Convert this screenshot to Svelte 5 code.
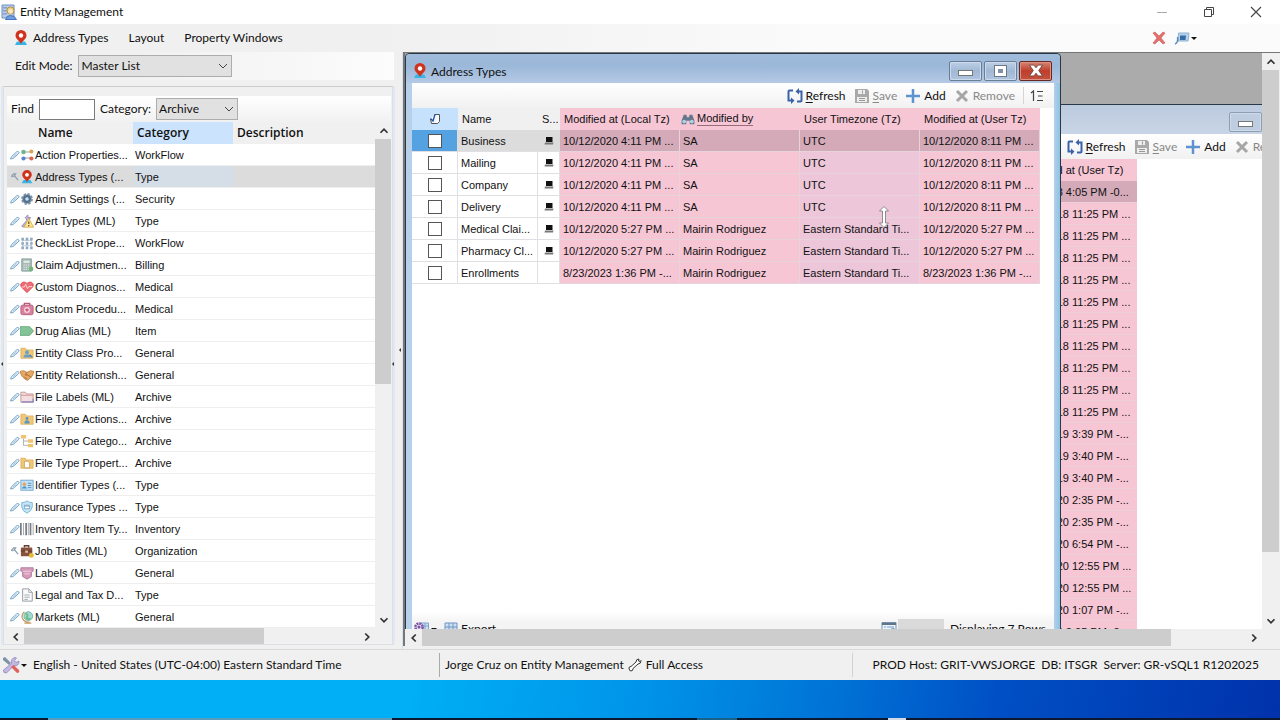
<script>
  const pen = '<path d="M1 14.500 2 11 10.500 3Q12.500 1.500 14 3T13.500 6L5 13.500 1 14.500Z" fill="#e4f1fa" stroke="#5b93bd" stroke-width="1.3"/><path d="M4.500 11.500 11 5.500" stroke="#8ab5d4"/>';
  const hammer = '<path d="M2 7 6 3 9 3 7 6 13 13" fill="none" stroke="#8b9dad" stroke-width="2"/><path d="M2 7 5 8 7 6" fill="#b9c4cf" stroke="#73879a"/>';
  const pin = '<path d="M2 15 4 11.500H12L14 15Z" fill="#35b5e8"/><path d="M8 14C7 11 2.500 9 2.500 5.500A5.500 5.500 0 0 1 13.500 5.500C13.500 9 9 11 8 14Z" fill="#d0321b"/><circle cx="8" cy="5.500" r="2.200" fill="#fff"/>';
  const folder = '<path d="M1 2.500H6L7.500 4.500H15V14H1Z" fill="#f1c777" stroke="#d9a850" stroke-width=".8"/>';
  const art = {
    flow: '<path d="M3 4.500H13M3 11.500H13" stroke="#98a4ae" stroke-width="1.200"/><circle cx="4" cy="4.500" r="2.600" fill="#6db58c"/><circle cx="13" cy="4" r="2.300" fill="#d8a24e"/><circle cx="4" cy="12" r="2.400" fill="#5a83d0"/><circle cx="13" cy="12" r="2.400" fill="#d9634f"/>',
    pin,
    gear: '<circle cx="8" cy="8" r="5.500" fill="#8ba1b7" stroke="#8094aa" stroke-width="2.500" stroke-dasharray="2.600 1.700"/><circle cx="8" cy="8" r="4.500" fill="#54718e"/><circle cx="8" cy="8" r="2" fill="#c9e6f8"/>',
    alert: '<path d="M2 14 8 7 6 4 9 1 9 4 12 4 10 8 4 15Z" fill="#c1b5dc" stroke="#9487bb"/><path d="M10 5 15.500 15H4.500Z" fill="#fbe391" stroke="#d7b04a"/><path d="M10 8.500V11.500M10 12.500V14" stroke="#59491f" stroke-width="1.300"/>',
    check: '<path d="M3 2V14M8 2V14M13 2V14M3 5H13M3 11H13" stroke="#bbcad8"/><path d="M1.500 2H4.500V5H1.500ZM6.500 2H9.500V5H6.500ZM11.500 2H14.500V5H11.500ZM1.500 7H4.500V10H1.500ZM6.500 7H9.500V10H6.500ZM11.500 7H14.500V10H11.500ZM1.500 12H4.500V15H1.500ZM6.500 12H9.500V15H6.500ZM11.500 12H14.500V15H11.500Z" fill="#91a9c3"/>',
    claim: '<path d="M2 1H13V15H2Z" fill="#a9b9b7" stroke="#84a09a"/><path d="M4 3H11V5.500H4Z" fill="#dff0e9"/><path d="M4 8H11M4 10.500H11M4 13H11" stroke="#e8f3ef" stroke-dasharray="1.500 1"/><circle cx="12.500" cy="12.500" r="2.800" fill="#74b67e"/>',
    heart: '<path d="M8 14.500 1.500 8C-1 4 4 0 8 4 12 0 17 4 14.500 8Z" fill="#ee6d74" stroke="#d9545f"/><path d="M2 8H5L6.500 5 8.500 10 10 7.500H14" fill="none" stroke="#fde1e2"/>',
    kit: '<path d="M5 4V1.500H11V4" fill="none" stroke="#b65c7c" stroke-width="1.500"/><rect x="1" y="3.500" width="14" height="11" rx="2" fill="#d9829f" stroke="#b55a7b"/><circle cx="8" cy="9" r="3.300" fill="#f8dce6"/><path d="M8 7V11M6 9H10" stroke="#c9486d" stroke-width="1.400"/>',
    tag: '<path d="M0 3H11L15.500 8 11 13H0Z" fill="#83c397" stroke="#68ad7f"/>',
    entity: folder + '<circle cx="8" cy="7" r="2.200" fill="#6a9fc9"/><path d="M4 13Q4 9.500 8 9.500T12 13Z" fill="#6a9fc9"/><path d="m11 10 3 3" stroke="#4e7fae" stroke-width="1.600"/>',
    hands: '<path d="M0 4 4 3 8 5 12 3 16 4 14 9 9 14 6 13 2 9Z" fill="#e5a965" stroke="#bd803f"/><path d="M8 5 6 8 9 8 13 11M5 10 8 13" fill="none" stroke="#9b642d"/>',
    label: '<path d="M1 2.500H6L7.500 4.500H15V14H1Z" fill="#f2dde1" stroke="#c3918f"/><path d="M1 6H15" stroke="#cf8f8d"/><path d="M2 13.500H15V10" fill="none" stroke="#8686c8" stroke-width="1.500"/>',
    action: folder + '<circle cx="8" cy="7.500" r="1.700" fill="#5796c8"/><path d="M5 13Q5 9.500 8 9.500T11 13Z" fill="#5796c8"/>',
    tree: '<path d="M4 5V13H10M4 8H10" fill="none" stroke="#a4acb1"/><path d="M1 1H7V5H1ZM9 6H15V10H9ZM9 11.500H15V15H9Z" fill="#efc36f"/>',
    prop: folder + '<path d="M5 6H9L11 8V13.500H5Z" fill="#fff" stroke="#c5a25a"/>',
    id: '<rect x="1" y="2.500" width="14" height="11.500" fill="#c4e1f5" stroke="#69a5cd"/><circle cx="5" cy="7" r="2" fill="#e5a458"/><path d="M2 12Q5 7 8 12Z" fill="#4a91c5"/><path d="M9 6H13M9 8.500H13M9 11H13" stroke="#4687b7"/>',
    shield: '<path d="M2 3Q6 3 8 1 10 3 14 3V8Q13 13 8 15 3 13 2 8Z" fill="#c4e5fa" stroke="#6fb0d9"/><path d="M5 6H11V10H5Z" fill="#fff" stroke="#77a2c1"/><path d="M5 7H11" stroke="#77a2c1"/>',
    bars: '<path d="M1 1V15M7 1V15M12 1V15" stroke="#7b8087" stroke-width="2"/><path d="M4 1V15M9.500 1V15M15 1V15" stroke="#9da1a8"/>',
    case: '<path d="M5 4V2H10V4" fill="none" stroke="#633e31" stroke-width="1.500"/><rect x="1" y="4" width="13" height="10" rx="1" fill="#89523e"/><path d="M1 8H14" stroke="#5e3428"/><circle cx="13" cy="13" r="2.800" fill="#dfbb38"/><path d="M6 7.500H9V10H6Z" fill="#dec0a7"/>',
    ribbon: '<path d="M1 2H15V6H13V12L8 15 3 12V6H1Z" fill="#d69ab9" stroke="#ae769b"/><path d="M3 6H13M5 9H11" stroke="#f4dce8"/>',
    doc: '<path d="M3 1H10L14 5V15H3Z" fill="#fafafa" stroke="#8c949c"/><path d="M10 1V5H14M5 8H11M5 10.500H11M5 13H9" fill="none" stroke="#9aa2aa"/>',
    globe: '<circle cx="9.500" cy="7" r="5" fill="#a1d8d0" stroke="#65b2a6"/><path d="M6 4Q10 5 8 8T12 10" fill="none" stroke="#67bd83" stroke-width="2"/><path d="M5 2Q1 6 3 10T11 14M5 15H13" fill="none" stroke="#c79c62" stroke-width="1.500"/>'
  };
  const items = [
    ['flow', 'Action Properties...', 'WorkFlow'], ['pin', 'Address Types (...', 'Type'], ['gear', 'Admin Settings (...', 'Security'],
    ['alert', 'Alert Types (ML)', 'Type'], ['check', 'CheckList Prope...', 'WorkFlow'], ['claim', 'Claim Adjustmen...', 'Billing'],
    ['heart', 'Custom Diagnos...', 'Medical'], ['kit', 'Custom Procedu...', 'Medical'], ['tag', 'Drug Alias (ML)', 'Item'],
    ['entity', 'Entity Class Pro...', 'General'], ['hands', 'Entity Relationsh...', 'General'], ['label', 'File Labels (ML)', 'Archive'],
    ['action', 'File Type Actions...', 'Archive'], ['tree', 'File Type Catego...', 'Archive'], ['prop', 'File Type Propert...', 'Archive'],
    ['id', 'Identifier Types (...', 'Type'], ['shield', 'Insurance Types ...', 'Type'], ['bars', 'Inventory Item Ty...', 'Inventory'],
    ['case', 'Job Titles (ML)', 'Organization'], ['ribbon', 'Labels (ML)', 'General'], ['doc', 'Legal and Tax D...', 'Type'], ['globe', 'Markets (ML)', 'General']
  ];
  const rows = [
    ['Business', true, '10/12/2020 4:11 PM ...', 'SA', 'UTC', '10/12/2020 8:11 PM ...'],
    ['Mailing', true, '10/12/2020 4:11 PM ...', 'SA', 'UTC', '10/12/2020 8:11 PM ...'],
    ['Company', true, '10/12/2020 4:11 PM ...', 'SA', 'UTC', '10/12/2020 8:11 PM ...'],
    ['Delivery', true, '10/12/2020 4:11 PM ...', 'SA', 'UTC', '10/12/2020 8:11 PM ...'],
    ['Medical Clai...', true, '10/12/2020 5:27 PM ...', 'Mairin Rodriguez', 'Eastern Standard Ti...', '10/12/2020 5:27 PM ...'],
    ['Pharmacy Cl...', true, '10/12/2020 5:27 PM ...', 'Mairin Rodriguez', 'Eastern Standard Ti...', '10/12/2020 5:27 PM ...'],
    ['Enrollments', false, '8/23/2023 1:36 PM -...', 'Mairin Rodriguez', 'Eastern Standard Ti...', '8/23/2023 1:36 PM -...']
  ];
  const late = Array(10).fill('4/12/2018 11:25 PM ...');
  const backRows = ['4/5/2018 4:05 PM -0...', ...late, '8/14/2019 3:39 PM -...', '8/14/2019 3:40 PM -...', '8/14/2019 3:40 PM -...',
    '7/10/2020 2:35 PM -...', '7/10/2020 2:35 PM -...', '7/10/2020 6:54 PM -...', '7/13/2020 12:55 PM ...', '7/13/2020 12:55 PM ...',
    '7/14/2020 1:07 PM -...', '9/3/2020 3:05 PM -0...'];
</script>

<svelte:head><title>Entity Management</title></svelte:head>

{#snippet arrow(d)}
  <svg class="arrow" viewBox="0 0 16 16" aria-hidden="true"><path {d} fill="none" stroke="#333" stroke-width="2" /></svg>
{/snippet}

{#snippet pinIcon()}
  <svg class="ic" viewBox="0 0 16 16" aria-hidden="true">{@html pin}</svg>
{/snippet}

{#snippet toolbar()}
  <div class="tools">
    <button><svg class="ic" viewBox="0 0 16 16"><path d="M6 2.500H2.500Q1.500 2.500 1.500 3.500V12.500H5M10 13.500H13.500Q14.500 13.500 14.500 12.500V3.500H10" fill="none" stroke="#3a62a8" stroke-width="2"/><path d="M12 0 8.500 3.500 12 6.500ZM4 9.500 7.500 12.500 4 16Z" fill="#3a62a8"/></svg><span><u>R</u>efresh</span></button>
    <button class="off"><svg class="ic" viewBox="0 0 16 16"><path d="M1 1H13L15 3V15H1Z" fill="#a9a9a9"/><path d="M4 2H11V6H4ZM3 9H13V14H3Z" fill="#eee"/><path d="M8.500 2.500V5.500M5 10.500H11M5 12.500H11" stroke="#999"/></svg><span><u>S</u>ave</span></button>
    <button><svg class="ic" viewBox="0 0 16 16"><path d="M8 1V15M1 8H15" stroke="#5f93d0" stroke-width="2.500"/></svg><span>Add</span></button>
    <button class="off"><svg class="ic" viewBox="0 0 16 16"><path d="M3 3 13 13M13 3 3 13" stroke="#a6a6a6" stroke-width="3"/></svg><span>Remove</span></button>
    <i class="bar"></i>
    <button aria-label="Row numbering"><svg class="ic" viewBox="0 0 16 16"><path d="M1 5 3.500 3V13M7 3.500H13M8 8H12.500M7 12.500H13" fill="none" stroke="#444" stroke-width="1.200"/></svg></button>
  </div>
{/snippet}

{#snippet winButtons()}
  <div class="wbtns">
    <button aria-label="Minimize"><i class="min"></i></button>
    <button aria-label="Maximize"><i class="max"></i></button>
    <button class="red" aria-label="Close"><svg viewBox="0 0 16 12"><path d="M2 1H6L8 3.500 10 1H14L10.500 6 14 11H10L8 8.500 6 11H2L5.500 6Z" fill="#fff" stroke="#6d4540" stroke-width=".8"/></svg></button>
  </div>
{/snippet}

<div class="app">
  <header class="title">
    <svg class="ic" viewBox="0 0 16 16" aria-hidden="true"><path d="M1 1H13V14H1Z" fill="#b9cde9" stroke="#6d8fc0"/><path d="M3 3V12M5 3V12" stroke="#5378b4" stroke-dasharray="1.500 1.500"/><circle cx="9.500" cy="6.500" r="3.600" fill="#ecd07e" stroke="#b08f4a"/><circle cx="9.500" cy="7.500" r="2.300" fill="#f9e8c4"/><path d="M4.500 15.500Q5 11.500 9.500 11.500T15.500 15.500Z" fill="#6f9ee0" stroke="#4a76bd"/></svg>
    <h1>Entity Management</h1>
    <div class="caption">
      <button aria-label="Minimize"><svg viewBox="0 0 12 12"><path d="M1 6.500H11" stroke="#aaa"/></svg></button>
      <button aria-label="Restore"><svg viewBox="0 0 12 12"><path d="M1.500 3.500H8.500V10.500H1.500ZM3.500 3.500V1.500H10.500V8.500H8.500" fill="none" stroke="#444"/></svg></button>
      <button aria-label="Close"><svg viewBox="0 0 12 12"><path d="M1 1 11 11M11 1 1 11" stroke="#444" stroke-width="1.100"/></svg></button>
    </div>
  </header>

  <nav class="menu">
    <button>{@render pinIcon()}<span>Address Types</span></button>
    <button>Layout</button>
    <button>Property Windows</button>
    <div class="menu-end">
      <button aria-label="Close window"><svg class="ic" viewBox="0 0 16 16"><path d="M2 3 4 2 8 6 12 2 14 3 10 8 14 13 12 14 8 10 4 14 2 13 6 8Z" fill="#e3706b" stroke="#cf5955" stroke-width=".6"/></svg></button>
      <button aria-label="Windows"><svg class="ic" viewBox="0 0 16 16"><path d="M4.500 3H15L14 11H4Z" fill="#b8d1e8" stroke="#8fb2d3"/><path d="M6 5.500H12L11.500 10H6Z" fill="#376da6"/><path d="M1 14Q4.500 12.500 3.500 7" fill="none" stroke="#5b8cbb" stroke-width="1.500"/></svg><i class="caret"></i></button>
    </div>
  </nav>

  <main>
    <aside>
      <div class="mode">
        <label for="mode">Edit Mode:</label>
        <div class="combo wide"><select id="mode"><option>Master List</option></select><svg viewBox="0 0 10 10" aria-hidden="true"><path d="M1 3 5 7 9 3" fill="none" stroke="#444"/></svg></div>
      </div>
      <section class="panel">
        <div class="find">
          <label for="find">Find</label><input id="find" type="text" />
          <label for="cat">Category:</label>
          <div class="combo"><select id="cat"><option>Archive</option></select><svg viewBox="0 0 10 10" aria-hidden="true"><path d="M1 3 5 7 9 3" fill="none" stroke="#444"/></svg></div>
        </div>
        <div class="list">
          <div class="clip">
            <table class="nav">
              <colgroup><col class="c-name" /><col class="c-cat" /><col /></colgroup>
              <thead><tr><th class="first">Name</th><th class="sorted">Category</th><th>Description</th></tr></thead>
              <tbody>
                {#each items as [icon, name, cat], i}
                  <tr class:sel={i === 1}>
                    <td><div class="entry"><svg class="mini" viewBox="0 0 16 16" aria-hidden="true">{@html i === 1 || i === 18 ? hammer : pen}</svg><svg class="obj" viewBox="0 0 16 16" aria-hidden="true">{@html art[icon]}</svg><span>{name}</span></div></td>
                    <td>{cat}</td><td></td>
                  </tr>
                {/each}
              </tbody>
            </table>
          </div>
          <div class="sb v">
            <button aria-label="Scroll up">{@render arrow('M4 10 8 6 12 10')}</button>
            <div class="track"><div class="thumb half"></div></div>
            <button aria-label="Scroll down">{@render arrow('M4 6 8 10 12 6')}</button>
          </div>
          <div class="sb h">
            <button aria-label="Scroll left">{@render arrow('M10 4 6 8 10 12')}</button>
            <div class="track"><div class="thumb part"></div></div>
            <button aria-label="Scroll right">{@render arrow('M6 4 10 8 6 12')}</button>
          </div>
        </div>
      </section>
      <i class="grip g1"></i><i class="grip g2"></i><i class="grip g3"></i>
    </aside>

    <section class="mdi">
      <div class="canvas">
        <article class="win back">
          <div class="wtitle">{@render winButtons()}</div>
          <div class="body">
            {@render toolbar()}
            <table class="stamps">
              <thead><tr><th>Modified at (User Tz)</th></tr></thead>
              <tbody>{#each backRows as stamp, i}<tr class:cur={i === 0}><td>{stamp}</td></tr>{/each}</tbody>
            </table>
          </div>
        </article>

        <article class="win front">
          <div class="wtitle">
            {@render pinIcon()}<h2>Address Types</h2>
            {@render winButtons()}
          </div>
          <div class="body">
            {@render toolbar()}
            <table class="grid">
              <colgroup><col class="k" /><col class="n" /><col class="s" /><col /><col /><col /><col /></colgroup>
              <thead>
                <tr>
                  <th class="pick"><svg viewBox="0 0 12 12" aria-label="Selected"><path d="M5.500 1.500H10.500V8.500L8.500 10.500H2.500L1.500 6" fill="#f4f9ff" stroke="#555"/><path d="M1.500 5.500 4 8 6 1.500" fill="none" stroke="#2853a0" stroke-width="1.400"/></svg></th>
                  <th>Name</th><th>S...</th>
                  <th class="p">Modified at (Local Tz)</th>
                  <th class="p find-col"><div class="by"><svg viewBox="0 0 16 14" aria-hidden="true"><path d="M3 2H6L7 5H9L10 2H13L15.500 9V13H10V9H6V13H.5V9Z" fill="#65778a"/><circle cx="3.500" cy="10" r="2.200" fill="#a9d4e8"/><circle cx="12.500" cy="10" r="2.200" fill="#a9d4e8"/></svg><span>Modified by</span></div></th>
                  <th class="p">User Timezone (Tz)</th><th class="p">Modified at (User Tz)</th>
                </tr>
              </thead>
              <tbody>
                {#each rows as [name, sys, local, by, zone, user], i}
                  <tr class:cur={i === 0}>
                    <td class="ck"><input type="checkbox" aria-label={name} /></td>
                    <td>{name}</td>
                    <td class="ck">{#if sys}<svg viewBox="0 0 10 9" aria-label="System"><path d="M2 1H8.500V6H2Z" fill="#111"/><path d="M1 6.500H9.500L9 8.500H.5Z" fill="#777"/></svg>{/if}</td>
                    <td class="p">{local}</td><td class="p">{by}</td><td class="p z">{zone}</td><td class="p">{user}</td>
                  </tr>
                {/each}
              </tbody>
            </table>
            <footer>
              <button aria-label="Settings"><svg class="ic" viewBox="0 0 16 16"><path d="M8 2H15.500V12H8Z" fill="#cfe1f3" stroke="#7ea3cd"/><path d="M8 5H15M12 2V12" stroke="#7ea3cd"/><circle cx="6" cy="6" r="3.600" fill="#eadff3" stroke="#7652a0" stroke-width="2.500" stroke-dasharray="2 .8"/><circle cx="6" cy="6" r="1.500" fill="#7652a0"/></svg><i class="caret"></i></button>
              <button><svg class="ic" viewBox="0 0 16 16"><path d="M2 2H14V13H2Z" fill="#cfe1f3" stroke="#6f94c5"/><path d="M2 6H14M2 9H14M6 2V13M10 2V13" stroke="#6f94c5"/><path d="M8 8H15V12H8Z" fill="#7863ae"/></svg><span>Export</span></button>
              <svg class="ic info" viewBox="0 0 16 16" aria-hidden="true"><path d="M1 1.500H15V14H1Z" fill="#eef5fc" stroke="#7391ad"/><path d="M1 3H15" stroke="#60758a" stroke-width="2"/><path d="M3 6H5M6 6H13M3 8.500H5M6 8.500H11M3 11H5M6 11H9" stroke="#6a9bd0"/><circle cx="12" cy="10" r="2.500" fill="#cfe4f5" stroke="#7391ad"/></svg>
              <div class="blank"></div><span>Displaying 7 Rows</span>
            </footer>
          </div>
        </article>
        <svg class="cursor" viewBox="0 0 10 22" aria-hidden="true"><path d="M5 .5 9.500 5H6.500V17H9.500L5 21.500.5 17H3.500V5H.5Z" fill="#fff" stroke="#777" stroke-width=".8"/></svg>
      </div>
      <div class="sb v">
        <button aria-label="Scroll up">{@render arrow('M4 10 8 6 12 10')}</button>
        <div class="track"><div class="thumb most"></div></div>
        <button aria-label="Scroll down">{@render arrow('M4 6 8 10 12 6')}</button>
      </div>
      <div class="sb h">
        <button aria-label="Scroll left">{@render arrow('M10 4 6 8 10 12')}</button>
        <div class="track"><div class="thumb wideh"></div></div>
        <button aria-label="Scroll right">{@render arrow('M6 4 10 8 6 12')}</button>
      </div>
    </section>
  </main>

  <div class="status">
    <div class="st1">
      <button aria-label="Tools"><svg viewBox="0 0 18 18"><path d="M1 2 3 1 9 7 7 9 1 4Z" fill="#7e93a8"/><path d="M1.500 14 9.500 7.500Q8.500 2.500 13 1.500L14.500 2 12.500 4.500 14 6.500 17 5Q17.500 10 11.500 10L4.500 17Q1 17.500 1.500 14Z" fill="#c3b8e0" stroke="#8f85bd" stroke-width=".8"/><path d="M9 11 11.500 9 17 14Q18 17 15 17Z" fill="#e0645d"/></svg><i class="caret"></i></button>
      <span>English - United States (UTC-04:00) Eastern Standard Time</span>
    </div>
    <div class="st2">
      <span>Jorge Cruz on Entity Management</span>
      <svg viewBox="0 0 14 14" aria-hidden="true"><path d="M1 10Q1 8.500 3 8.500L8 4Q8 1 11 1L10.500 3 12 3.500 13 2.500Q13 6 10 6L5 10.500Q5 13 3 13 1 13 1 10Z" fill="#fff" stroke="#333"/></svg>
      <span>Full Access</span>
    </div>
    <div class="st3">PROD Host: GRIT-VWSJORGE &nbsp;DB: ITSGR &nbsp;Server: GR-vSQL1 R1202025</div>
  </div>
  <div class="desk"></div>
  <div class="task"><i></i><i></i><i></i></div>
</div>

<style>
  :global(body) { margin: 0; }
  * { box-sizing: border-box; }
  .app { height: 100vh; display: flex; flex-direction: column; overflow: hidden; background: #f0f0f0; color: #111; font: 12px/16px Lato, "Open Sans", sans-serif; }
  button { border: 0; padding: 0; background: none; font: inherit; color: inherit; display: flex; align-items: center; white-space: nowrap; }
  svg { display: block; flex: none; }
  h1, h2 { margin: 0; font: inherit; }
  u { text-underline-offset: 2px; }
  .ic { width: 16px; height: 16px; }
  .caret { border: 3px solid transparent; border-top-color: #111; border-bottom: 0; margin-left: 1px; }

  .title { flex: none; height: 24px; background: #fff; display: flex; align-items: center; gap: 3px; padding-left: 1px; }
  .caption { margin-left: auto; display: flex; padding-right: 1px; }
  .caption button { width: 47px; height: 22px; justify-content: center; }
  .caption svg { width: 12px; height: 12px; }
  .menu { flex: none; height: 28px; display: flex; align-items: center; gap: 20px; padding-left: 13px; background: linear-gradient(90deg, #f0f0f0 30%, #fbfbfb 65%); }
  .menu button { gap: 4px; }
  .menu-end { margin-left: auto; display: flex; gap: 7px; margin-right: 83px; }
  .menu-end button { gap: 0; }

  main { flex: 1; min-height: 0; display: flex; }
  aside { position: relative; flex: none; width: 403px; display: flex; flex-direction: column; border-right: 1px solid #d6e0ee; }
  .mode { flex: none; height: 28px; display: flex; align-items: center; gap: 6px; padding-left: 15px; margin-right: 8px; background: linear-gradient(90deg, #f0f0f0 30%, #fcfcfc); }
  .combo { position: relative; width: 82px; height: 22px; }
  .combo.wide { width: 154px; }
  .combo select { width: 100%; height: 100%; appearance: none; border: 1px solid #adadad; border-radius: 0; background: #e1e1e1; font: inherit; color: inherit; padding: 0 2px; }
  .combo svg { position: absolute; right: 4px; top: 6px; width: 10px; height: 10px; pointer-events: none; }
  .panel { flex: 1; min-height: 0; display: flex; flex-direction: column; margin: 6px 9px 4px 3px; border: 1px solid #dcdfe4; border-top-color: #ccc; box-shadow: -2px 0 #dfe8f3, 2px 0 #dfe8f3; padding: 9px 1px 0 3px; }
  .find { flex: none; height: 26px; display: flex; align-items: center; gap: 5px; padding-left: 4px; background: linear-gradient(#fff, #f1f1f1); }
  .find input { width: 56px; height: 21px; border: 1px solid #7a7a7a; padding: 0 2px; font: inherit; background: #fff; }
  .list { flex: 1; min-height: 0; display: grid; grid-template-columns: 1fr 16px; grid-template-rows: 1fr 16px; }
  .clip { overflow: hidden; background: #fff; }
  table { border-collapse: separate; border-spacing: 0; table-layout: fixed; font: 11px/14px "Liberation Sans", Arial, sans-serif; }
  th, td { padding: 0; text-align: left; font-weight: normal; white-space: nowrap; overflow: hidden; height: 22px; }
  .nav { width: 100%; }
  .c-name { width: 126px; }
  .c-cat { width: 100px; }
  .nav th { background: #f0f0f0; font: 600 12px/16px "Open Sans", sans-serif; padding-left: 4px; }
  .nav th.first { padding-left: 31px; }
  .nav th.sorted { background: #cbe3fd; }
  .nav td { border-bottom: 1px solid #eee; padding-left: 2px; }
  .nav .sel td { background: #dcdcdc; }
  .nav .sel td:nth-child(2) { background: #d5dde7; }
  .entry { display: flex; align-items: center; padding-left: 1px; }
  .mini { width: 10px; height: 12px; }
  .obj { width: 14px; height: 14px; margin-right: 1px; }

  .sb { display: flex; background: #f0f0f0; }
  .sb.v { flex-direction: column; }
  .sb.h { grid-column: 1; }
  .sb button { width: 17px; height: 17px; flex: none; justify-content: center; }
  .arrow { width: 14px; height: 14px; }
  .track { flex: 1; min-width: 0; min-height: 0; }
  .thumb { background: #cdcdcd; width: 100%; height: 100%; }
  .thumb.half { height: 52%; }
  .thumb.part { width: 72%; }
  .thumb.most { height: 89%; }
  .thumb.wideh { width: 91%; }
  .grip { position: absolute; width: 0; border: 2px solid transparent; border-left: 0; border-right-color: #333; }
  .g1 { left: 1px; top: 310px; }
  .g2 { right: 8px; top: 310px; }
  .g3 { right: 1px; top: 296px; }

  .mdi { flex: 1; min-width: 0; display: grid; grid-template-columns: minmax(0, 1fr) 17px; grid-template-rows: minmax(0, 1fr) 17px; border: 1px solid #777; border-width: 1px 0 0 2px; margin-bottom: 3px; padding-right: 1px; }
  .canvas { position: relative; overflow: hidden; background: #ababab; }
  .win { position: absolute; display: flex; flex-direction: column; border: 1px solid #2b3744; border-radius: 4px 4px 0 0; padding: 0 6px; }
  .front { left: 0; top: 0; width: 656px; height: 594px; background: linear-gradient(90deg, #b8cfea 0, #b8cfea 99%, #8dc4e4); }
  .back { left: 97px; top: 51px; width: 839px; height: 560px; background: #c8d5e5; border-radius: 0; }
  .wtitle { flex: none; height: 29px; display: flex; align-items: center; gap: 3px; margin: 0 -6px; padding: 4px 8px 0 6px; background: linear-gradient(#a0bbdb, #9bb8d9 40%, #b4c9e4); border-radius: 4px 4px 0 0; }
  .back .wtitle { background: linear-gradient(#bccade, #c8d5e6); }
  .wtitle h2 { padding-top: 2px; }
  .wbtns { margin-left: auto; display: flex; gap: 2px; }
  .wbtns button { width: 33px; height: 20px; justify-content: center; border: 1px solid #6a7d97; border-radius: 2px; background: linear-gradient(#bccfe6, #a1b8d5 50%, #afc5e0); box-shadow: inset 0 0 0 1px #ccdaeb; }
  .wbtns .red { background: linear-gradient(#d58577, #bf3e2b 50%, #c45240); border-color: #69281f; box-shadow: inset 0 0 0 1px #dc9384; }
  .back .wbtns button { background: #bfcde0; border-color: #909eb4; }
  .wbtns svg { width: 18px; height: 13px; }
  .min { width: 15px; height: 6px; background: #fff; border: 1px solid #777; margin-top: 5px; }
  .max { width: 13px; height: 12px; background: #7e8fa6; border: 4px solid #fff; outline: 1px solid #6d7888; outline-offset: -1px; }
  .body { flex: 1; min-height: 0; display: flex; flex-direction: column; background: #fff; }
  .tools { flex: none; height: 25px; display: flex; align-items: center; justify-content: flex-end; gap: 8px; padding-right: 8px; background: linear-gradient(#fff, #f1f1f1); }
  .tools button { gap: 3px; }
  .off { color: #888; }
  .bar { width: 1px; height: 17px; background: #d5d5d5; }
  .tools .bar { margin-right: -2px; }

  .grid { width: 628px; }
  .grid .k { width: 46px; }
  .grid .n { width: 80px; }
  .grid .s { width: 22px; }
  .grid th { background: #f0f0f0; padding-left: 4px; }
  .grid th.pick { background: #c6e1fc; padding: 0; }
  .pick svg { width: 12px; height: 12px; margin: auto; }
  .grid th.p { background: #f6c6d5; }
  .grid th.find-col { padding-left: 1px; }
  .by { display: flex; align-items: center; gap: 2px; }
  .by svg { width: 14px; height: 12px; }
  .by span { border-bottom: 1px solid #996c7b; line-height: 13px; }
  .grid td { border: 1px solid #e0e0e4; border-width: 0 1px 1px 0; padding-left: 3px; }
  .grid td.p { background: #f6c6d5; border-color: #e6d3dc; }
  .grid td.z { background: #edc6d9; }
  .grid td.ck { padding: 0; }
  .ck svg { width: 10px; height: 9px; margin: auto; }
  .ck input { display: block; appearance: none; width: 14px; height: 14px; margin: auto; border: 1px solid #555; background: #fff; }
  .grid .cur td { background: #dcdcdc; border-right-color: #dcdcdc; }
  .grid .cur td:first-child { background: #55a2e2; }
  .grid .cur td.p { background: #d4aab9; border-right-color: #e6d3dc; }
  .stamps { width: 120px; margin-left: 508px; }
  .stamps th { background: #f6c6d5; padding-left: 4px; }
  .stamps td { background: #f6c6d5; padding-left: 3px; border-bottom: 1px solid #eccfda; }
  .stamps .cur td { background: #d4aab9; }
  footer { margin-top: auto; flex: none; height: 34px; display: flex; align-items: center; gap: 6px; padding: 0 8px 0 1px; background: linear-gradient(#fff, #f4f4f4 30%); }
  footer button { gap: 2px; }
  footer .caret { margin-left: 0; }
  .info { margin-left: auto; }
  .blank { width: 46px; height: 20px; margin-left: -5px; background: #dadada; }
  .cursor { position: absolute; left: 474px; top: 153px; width: 10px; height: 22px; }

  .status { flex: none; height: 31px; display: flex; align-items: stretch; border-top: 1px solid #d9d9d9; }
  .status > div { display: flex; align-items: center; }
  .st1 { width: 439px; padding-left: 2px; gap: 6px; }
  .st1 button svg { width: 18px; height: 18px; }
  .st2 { width: 413px; border-left: 1px solid #aaa; padding-left: 5px; gap: 4px; margin: 3px 0; }
  .st2 svg { width: 14px; height: 14px; }
  .st3 { flex: 1; border-left: 1px solid #d2d2d2; justify-content: flex-end; padding-right: 21px; margin: 3px 0; white-space: pre; }
  .desk { flex: none; height: 38px; background: linear-gradient(100deg, #00aff7 0, #00aff5 32%, #0094e9 50%, #0073d6 65%, #004fc4 78%, #0032ab 100%); }
  .task { flex: none; height: 2px; background: #0c1830; display: grid; grid-template-columns: 344px 40px 18px; column-gap: 150px; padding-left: 48px; }
  .task i:nth-child(1) { background: #5b9cbe; }
  .task i:nth-child(2) { background: #17628a; margin: 0 -155px 0 155px; }
  .task i:nth-child(3) { background: #d5dbe6; margin: 0 -156px 0 156px; }
</style>
